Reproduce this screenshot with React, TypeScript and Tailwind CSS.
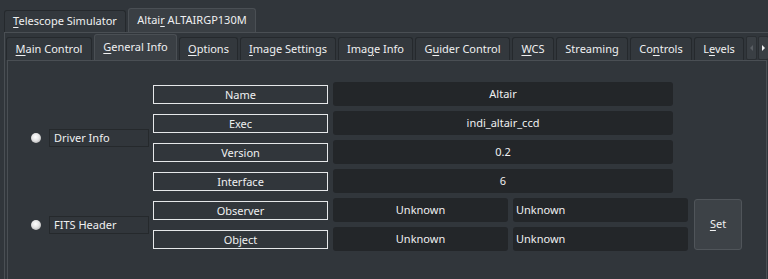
import React from "react";

const U = ({ children }: { children: React.ReactNode }) => (
  <span className="underline underline-offset-2 decoration-1">{children}</span>
);

function Tab({ w, active, children, top }: { w: number; active?: boolean; children: React.ReactNode; top?: boolean }) {
  return (
    <div
      style={{ width: w }}
      className={
        "flex items-center justify-center rounded-t-[3px] border border-b-0 whitespace-nowrap " +
        (active
          ? "bg-[#3a3f44] border-[#4a4f54] " + (top ? "h-[24px]" : "h-[26px]")
          : "bg-[#33383d] border-[#25292d] " + (top ? "h-[22px]" : "h-[23px]"))
      }
    >
      {children}
    </div>
  );
}

function LabelBox({ children }: { children: React.ReactNode }) {
  return (
    <div className="w-[175px] h-[19px] border border-[#e6e8ea] flex items-center justify-center leading-none">
      {children}
    </div>
  );
}

function Value({ w, children, left }: { w: number; children: React.ReactNode; left?: boolean }) {
  return (
    <div
      style={{ width: w }}
      className={
        "h-[24px] rounded-[3px] bg-[#232629] flex items-center " + (left ? "justify-start pl-[3px]" : "justify-center")
      }
    >
      {children}
    </div>
  );
}

function Led() {
  return (
    <div
      className="w-[10px] h-[10px] rounded-full"
      style={{ background: "radial-gradient(circle at 45% 40%, #ffffff 0%, #e4e4e4 45%, #9a9a9a 100%)" }}
    />
  );
}

function GroupLabel({ children }: { children: React.ReactNode }) {
  return (
    <div className="flex items-center">
      <div className="ml-[23px] mr-[8px]">
        <Led />
      </div>
      <div className="w-[100px] h-[18px] border border-[#25292c] flex items-center pl-[4px] leading-none">
        {children}
      </div>
    </div>
  );
}

export default function App() {
  return (
    <div
      className="w-[768px] h-[279px] overflow-hidden bg-[#31363b] text-[#eff0f1] text-[11px]"
      style={{ fontFamily: '"Noto Sans", sans-serif' }}
    >
      {/* top tabs */}
      <div className="flex items-end gap-[2px] pl-[4px] pt-[8px] h-[32px]">
        <Tab w={122} top>
          <span><U>T</U>elescope Simulator</span>
        </Tab>
        <Tab w={128} top active>
          <span>Altai<U>r</U> ALTAIRGP130M</span>
        </Tab>
      </div>
      {/* outer pane */}
      <div className="ml-[4px] border-t border-l border-[#4a4f54] h-[247px] pl-[1px]">
        <div className="flex items-end h-[27px]">
          <div className="flex items-end gap-[2px]">
            <Tab w={86}><span><U>M</U>ain Control</span></Tab>
            <Tab w={83} active><span><U>G</U>eneral Info</span></Tab>
            <Tab w={59}><span><U>O</U>ptions</span></Tab>
            <Tab w={96}><span><U>I</U>mage Settings</span></Tab>
            <Tab w={75}><span>Ima<U>g</U>e Info</span></Tab>
            <Tab w={95}><span>G<U>u</U>ider Control</span></Tab>
            <Tab w={42}><span><U>W</U>CS</span></Tab>
            <Tab w={72}><span>Streaming</span></Tab>
            <Tab w={62}><span>Co<U>n</U>trols</span></Tab>
            <Tab w={50}><span>L<U>e</U>vels</span></Tab>
          </div>
          <div className="flex items-end gap-[1px] ml-[2px]">
            <div className="w-[11px] h-[24px] bg-[#3a3f44] border border-[#2a2e32] rounded-[2px] flex items-center justify-center">
              <div className="w-0 h-0 border-y-[3px] border-y-transparent border-r-[3px] border-r-[#5a5f64]" />
            </div>
            <div className="w-[11px] h-[24px] bg-[#3a3f44] border border-[#2a2e32] rounded-[2px] flex items-center justify-center">
              <div className="w-0 h-0 border-y-[3px] border-y-transparent border-l-[3px] border-l-[#eff0f1]" />
            </div>
          </div>
        </div>
        {/* inner pane */}
        <div className="ml-[1px] w-[760px] h-[230px] border-t border-l border-r border-[#4a4f54] bg-[#31363b] pt-[21px]">
          <div className="flex flex-col gap-[5px]">
            <div className="flex items-center">
              <div className="w-[145px]">
                <GroupLabel>Driver Info</GroupLabel>
              </div>
              <div className="flex flex-col gap-[5px]">
                {[
                  ["Name", "Altair"],
                  ["Exec", "indi_altair_ccd"],
                  ["Version", "0.2"],
                  ["Interface", "6"],
                ].map(([k, v]) => (
                  <div key={k} className="flex items-center gap-[5px]">
                    <LabelBox>{k}</LabelBox>
                    <Value w={340}>{v}</Value>
                  </div>
                ))}
              </div>
            </div>
            <div className="flex items-center">
              <div className="w-[145px]">
                <GroupLabel>FITS Header</GroupLabel>
              </div>
              <div className="flex flex-col gap-[5px]">
                {["Observer", "Object"].map((k) => (
                  <div key={k} className="flex items-center gap-[5px]">
                    <LabelBox>{k}</LabelBox>
                    <Value w={175}>Unknown</Value>
                    <Value w={175} left>Unknown</Value>
                  </div>
                ))}
              </div>
              <div className="ml-[6px] w-[48px] h-[51px] rounded-[3px] bg-[#3d4247] border border-[#50555a] flex items-center justify-center">
                <span><U>S</U>et</span>
              </div>
            </div>
          </div>
        </div>
      </div>
    </div>
  );
}
